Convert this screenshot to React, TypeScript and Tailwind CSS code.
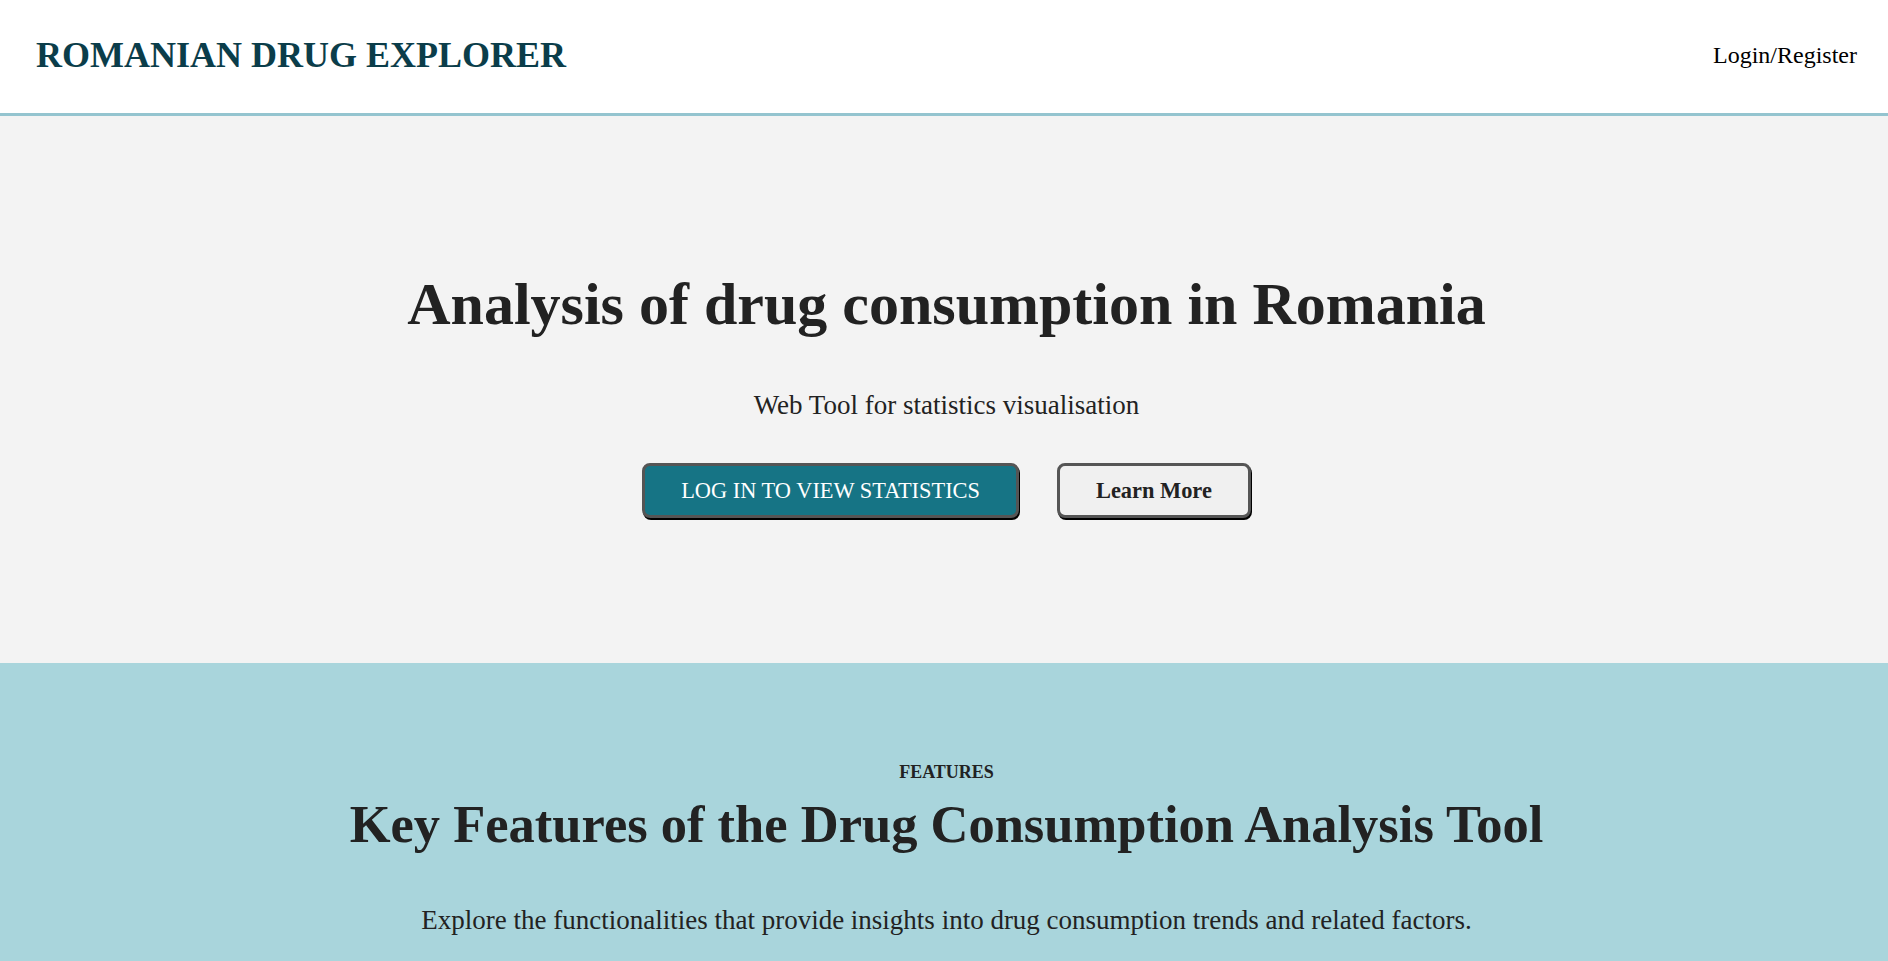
const serif = { fontFamily: '"Liberation Serif", "Times New Roman", serif' };

function Header() {
  return (
    <header className="h-[116px] bg-white border-b-[3px] border-[#94c4cf] flex items-center justify-between pl-[36px] pr-[31px] pb-1">
      <a href="#" className="text-[36px] leading-none font-bold text-[#0b3d4a]">
        ROMANIAN DRUG EXPLORER
      </a>
      <a href="#" className="text-[24px] leading-none text-black">
        Login/Register
      </a>
    </header>
  );
}

function Hero() {
  return (
    <section className="bg-[#f3f3f3] h-[547px] flex flex-col items-center pt-[158px] pl-[5px]">
      <h1 className="text-[60px] leading-none font-bold text-[#222]">
        Analysis of drug consumption in Romania
      </h1>
      <p className="mt-[58px] text-[27px] leading-none text-[#222]">
        Web Tool for statistics visualisation
      </p>
      <div className="mt-[44px] flex gap-[38px]">
        <button
          type="button"
          className="rounded-[8px] border-[3px] border-[#555] shadow-[1px_2px_0_#000] bg-[#167485] text-white text-[22.4px] leading-[25px] px-9 py-3"
        >
          LOG IN TO VIEW STATISTICS
        </button>
        <button
          type="button"
          className="rounded-[8px] border-[3px] border-[#555] shadow-[1px_2px_0_#000] bg-[#f0f0f0] text-[#222] font-bold text-[22.4px] leading-[25px] px-9 py-3"
        >
          Learn More
        </button>
      </div>
    </section>
  );
}

function Features() {
  return (
    <section className="bg-[#a9d5dc] flex flex-col items-center pt-[100px] pb-24 pl-[5px] min-h-[400px]">
      <span className="text-[18px] leading-none font-bold text-[#222]">FEATURES</span>
      <h2 className="mt-[17px] text-[52.5px] leading-none font-bold text-[#222]">
        Key Features of the Drug Consumption Analysis Tool
      </h2>
      <p className="mt-[56px] text-[27px] leading-none text-[#222]">
        Explore the functionalities that provide insights into drug consumption trends and related factors.
      </p>
    </section>
  );
}

export default function App() {
  return (
    <div style={serif} className="min-h-screen">
      <Header />
      <Hero />
      <Features />
    </div>
  );
}
